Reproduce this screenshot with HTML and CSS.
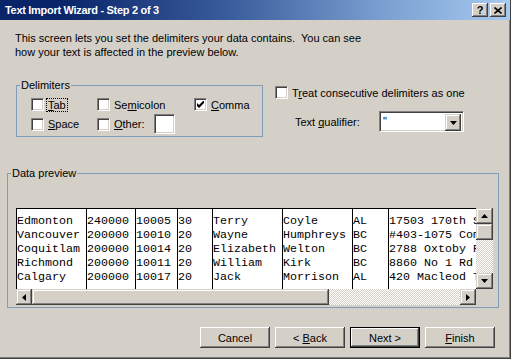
FILE: index.html
```html
<!DOCTYPE html>
<html lang="en">
<head>
    <meta charset="UTF-8">
    <title>Text Import Wizard - Step 2 of 3</title>
    <link rel="stylesheet" href="styles.css">
</head>
<body>
<div class="window">
    <div class="titlebar">
        <span class="title">Text Import Wizard - Step 2 of 3</span>
        <div class="title-buttons">
            <span class="title-btn help">?</span>
            <span class="title-btn">
                <svg width="8" height="7" viewBox="0 0 8 7"><path d="M0.5 0.5 L7.5 6.5 M7.5 0.5 L0.5 6.5" stroke="#000" stroke-width="1.6"/></svg>
            </span>
        </div>
    </div>

    <div class="dialog">
        <p class="intro">This screen lets you set the delimiters your data contains.&nbsp; You can see<br>how your text is affected in the preview below.</p>

        <div class="options">
            <fieldset class="group delimiters">
                <legend>Delimiters</legend>
                <div class="delim-grid">
                    <label class="check"><span class="box"></span><span class="focus"><u>T</u>ab</span></label>
                    <label class="check"><span class="box"></span><span>Se<u>m</u>icolon</span></label>
                    <label class="check"><span class="box"><svg width="7" height="7" viewBox="0 0 7 7"><path d="M0 2 L2 4 L7 -1 L7 2 L2 7 L0 5 Z" fill="#000"/></svg></span><span><u>C</u>omma</span></label>
                    <label class="check"><span class="box"></span><span><u>S</u>pace</span></label>
                    <label class="check"><span class="box"></span><span><u>O</u>ther:</span><span class="textbox"></span></label>
                </div>
            </fieldset>

            <div class="side-options">
                <label class="check"><span class="box"></span><span>T<u>r</u>eat consecutive delimiters as one</span></label>
                <div class="qualifier">
                    <span class="qualifier-label">Text <u>q</u>ualifier:</span>
                    <div class="combo">
                        <span class="combo-value">"</span>
                        <span class="raised combo-btn"><svg width="7" height="4" viewBox="0 0 7 4"><path d="M0 0 H7 L3.5 4 Z" fill="#000"/></svg></span>
                    </div>
                </div>
            </div>
        </div>

        <fieldset class="group preview-group">
            <legend>Data preview</legend>
            <div class="preview">
                <div class="data">
                    <div class="col c1">Edmonton
Vancouver
Coquitlam
Richmond
Calgary</div>
                    <div class="col c2">240000
200000
200000
200000
200000</div>
                    <div class="col c3">10005
10010
10014
10011
10017</div>
                    <div class="col c4">30
20
20
20
20</div>
                    <div class="col c5">Terry
Wayne
Elizabeth
William
Jack</div>
                    <div class="col c6">Coyle
Humphreys
Welton
Kirk
Morrison</div>
                    <div class="col c7">AL
BC
BC
BC
AL</div>
                    <div class="col c8">17503 170th St
#403-1075 Comox
2788 Oxtoby Pl
8860 No 1 Rd S
420 Macleod Tr</div>
                </div>

                <div class="vscroll">
                    <span class="raised sb-btn"><svg width="7" height="4" viewBox="0 0 7 4"><path d="M3.5 0 L7 4 H0 Z" fill="#000"/></svg></span>
                    <span class="raised v-thumb"></span>
                    <span class="track"></span>
                    <span class="raised sb-btn"><svg width="7" height="4" viewBox="0 0 7 4"><path d="M0 0 H7 L3.5 4 Z" fill="#000"/></svg></span>
                </div>

                <div class="hscroll">
                    <span class="raised sb-btn"><svg width="4" height="7" viewBox="0 0 4 7"><path d="M0 3.5 L4 0 V7 Z" fill="#000"/></svg></span>
                    <span class="raised h-thumb"></span>
                    <span class="track"></span>
                    <span class="raised sb-btn"><svg width="4" height="7" viewBox="0 0 4 7"><path d="M0 0 L4 3.5 L0 7 Z" fill="#000"/></svg></span>
                </div>

                <div class="corner"></div>
            </div>
        </fieldset>

        <div class="buttons">
            <button class="btn">Cancel</button>
            <button class="btn">&lt; <u>B</u>ack</button>
            <button class="btn default">Next &gt;</button>
            <button class="btn"><u>F</u>inish</button>
        </div>
    </div>
</div>
</body>
</html>
```

FILE: styles.css
```css
* {
    box-sizing: border-box;
}
body {
    margin: 0;
    background-color: #d4d0c8;
    font-family: "Liberation Sans", Arial, sans-serif;
    font-size: 11px;
    color: #000;
}
.window {
    width: 511px;
    height: 359px;
    display: flex;
    flex-direction: column;
    background-color: #d4d0c8;
    border-right: 1px solid #404040;
    border-bottom: 1px solid #404040;
    box-shadow: inset -1px -1px #808080;
}
.titlebar {
    height: 20px;
    flex-shrink: 0;
    display: flex;
    align-items: center;
    justify-content: space-between;
    padding: 0 4px 0 5px;
    background: linear-gradient(to right, #0a246a 0%, #0a246a 12%, #3a5d9c 45%, #7b9fd0 75%, #a6caf0 100%);
}
.title {
    color: #fff;
    font-weight: bold;
    font-size: 11px;
    letter-spacing: -0.3px;
}
.title-buttons {
    display: flex;
    gap: 2px;
}
.title-btn {
    width: 16px;
    height: 14px;
    display: flex;
    align-items: center;
    justify-content: center;
    background-color: #d4d0c8;
    box-shadow: inset -1px -1px #404040, inset 1px 1px #fff, inset -2px -2px #808080;
}
.title-btn.help {
    font-weight: bold;
    font-size: 11px;
    line-height: 14px;
}

.intro {
    margin: 11px 0 0 15px;
    line-height: 14px;
}

.options {
    display: flex;
    margin: 20px 0 0 16px;
}
.group {
    margin: 0;
    padding: 0;
    border: 1px solid #7f9db9;
}
.group legend {
    margin-left: 3px;
    padding: 0 1px;
    line-height: 13px;
}
.delimiters {
    width: 247px;
}
.delim-grid {
    display: grid;
    grid-template-columns: 66px 97px auto;
    grid-template-rows: 13px 20px;
    row-gap: 3px;
    padding: 6px 0 2px 14px;
}
.check {
    display: flex;
    align-items: center;
    gap: 4px;
    white-space: nowrap;
}
.box {
    width: 13px;
    height: 13px;
    flex-shrink: 0;
    display: flex;
    align-items: center;
    justify-content: center;
    background-color: #fff;
    border: 1px solid;
    border-color: #808080 #fff #fff #808080;
    box-shadow: inset 1px 1px #404040, inset -1px -1px #d4d0c8;
}
.focus {
    outline: 1px dotted #000;
    outline-offset: 0;
    padding: 0 1px;
    margin-left: -1px;
}
.textbox {
    width: 21px;
    height: 20px;
    margin-left: 5px;
    background-color: #fff;
    border: 1px solid;
    border-color: #808080 #fff #fff #808080;
    box-shadow: inset 1px 1px #404040, inset -1px -1px #d4d0c8;
}

.side-options {
    margin-left: 12px;
    padding-top: 7px;
}
.qualifier {
    display: flex;
    align-items: center;
    margin: 12px 0 0 20px;
}
.qualifier-label {
    width: 84px;
}
.combo {
    width: 85px;
    height: 21px;
    display: flex;
    justify-content: space-between;
    padding: 2px;
    background-color: #fff;
    border: 1px solid;
    border-color: #808080 #fff #fff #808080;
    box-shadow: inset 1px 1px #404040, inset -1px -1px #d4d0c8;
}
.combo-value {
    padding-left: 1px;
    line-height: 14px;
}
.raised {
    display: flex;
    align-items: center;
    justify-content: center;
    background-color: #d4d0c8;
    box-shadow: inset -1px -1px #404040, inset 1px 1px #d4d0c8, inset -2px -2px #808080, inset 2px 2px #fff;
}
.combo-btn {
    width: 16px;
    height: 17px;
}

.preview-group {
    width: 492px;
    margin: 30px 0 0 7px;
}
.preview {
    display: grid;
    grid-template-columns: 1fr 17px;
    grid-template-rows: 81px 16px;
    margin: 28px 5px 2px 8px;
}
.data {
    display: flex;
    overflow: hidden;
    background-color: #fff;
    border-top: 1px solid #000;
    border-left: 1px solid #000;
}
.col {
    flex-shrink: 0;
    padding-top: 5px;
    border-left: 1px solid #000;
    font-family: "Liberation Mono", "Courier New", monospace;
    font-size: 11.67px;
    line-height: 14px;
    white-space: pre;
    overflow: hidden;
}
.c1 { width: 69px; border-left: none; }
.c2 { width: 49px; }
.c3 { width: 42px; }
.c4 { width: 35px; }
.c5 { width: 70px; }
.c6 { width: 70px; }
.c7 { width: 36px; }
.c8 { width: 105px; }

.vscroll {
    display: flex;
    flex-direction: column;
}
.hscroll {
    display: flex;
}
.sb-btn {
    width: 16px;
    height: 16px;
    flex-shrink: 0;
}
.vscroll .sb-btn {
    width: 17px;
}
.v-thumb {
    height: 16px;
}
.h-thumb {
    width: 297px;
    flex-shrink: 0;
}
.track {
    flex: 1;
    background-color: #fff;
    background-image: conic-gradient(#d4d0c8 25%, #fff 0 50%, #d4d0c8 0 75%, #fff 0);
    background-size: 2px 2px;
}
.corner {
    background-color: #d4d0c8;
}

.buttons {
    display: flex;
    justify-content: flex-end;
    gap: 5px;
    margin-top: 19px;
    padding-right: 15px;
}
.btn {
    width: 70px;
    height: 21px;
    padding: 0;
    border: none;
    font-family: inherit;
    font-size: 11px;
    color: #000;
    background-color: #d4d0c8;
    box-shadow: inset -1px -1px #404040, inset 1px 1px #fff, inset -2px -2px #808080;
}
.btn.default {
    border: 1px solid #000;
}
```
